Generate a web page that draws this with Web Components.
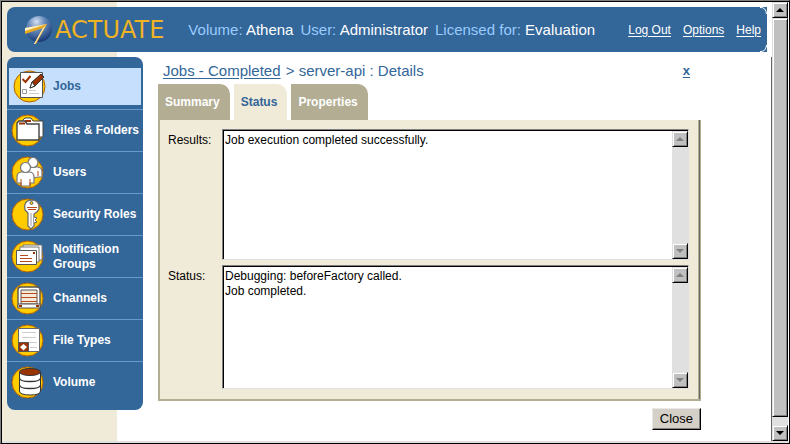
<!DOCTYPE html>
<html lang="en">
<head>
<meta charset="utf-8">
<title>Actuate - Jobs</title>
<style>
    html, body {
        height: 100%;
        margin: 0;
    }

    body {
        font-family: "Liberation Sans", Arial, sans-serif;
        font-size: 12px;
        --blue: #336699;
        --light-blue: #99ccff;
        --beige: #f0ead8;
        --tan: #b3ae93;
    }
</style>
</head>
<body>
<app-frame>
    <top-banner slot="banner">
        <brand-logo slot="logo">ACTUATE</brand-logo>
        <info-pair label="Volume:">Athena</info-pair>
        <info-pair label="User:">Administrator</info-pair>
        <info-pair label="Licensed for:">Evaluation</info-pair>
        <banner-link slot="links">Log Out</banner-link>
        <banner-link slot="links">Options</banner-link>
        <banner-link slot="links">Help</banner-link>
    </top-banner>

    <side-menu slot="menu">
        <menu-item icon="jobs" selected>Jobs</menu-item>
        <menu-item icon="files">Files &amp; Folders</menu-item>
        <menu-item icon="users">Users</menu-item>
        <menu-item icon="roles">Security Roles</menu-item>
        <menu-item icon="groups">Notification Groups</menu-item>
        <menu-item icon="channels">Channels</menu-item>
        <menu-item icon="types">File Types</menu-item>
        <menu-item icon="volume">Volume</menu-item>
    </side-menu>

    <crumb-bar parent="Jobs - Completed">&gt; server-api : Details</crumb-bar>
    <tab-strip>
        <tab-button>Summary</tab-button>
        <tab-button selected>Status</tab-button>
        <tab-button>Properties</tab-button>
    </tab-strip>
    <detail-panel>
        <log-field label="Results:" tall>Job execution completed successfully.</log-field>
        <log-field label="Status:">Debugging: beforeFactory called.
Job completed.</log-field>
    </detail-panel>
    <action-bar>Close</action-bar>
</app-frame>

<script>
const define = (name, html, setup) => {
  const template = document.createElement("template");
  template.innerHTML = html;

  customElements.define(
    name,
    class extends HTMLElement {
      constructor() {
        super();
        this.attachShadow({ mode: "open" });
        this.shadowRoot.appendChild(template.content.cloneNode(true));
      }

      connectedCallback() {
        if (setup) setup(this, this.shadowRoot);
      }
    }
  );
};

// every menu icon sits on the same 32px gold disc
const icons = {
  jobs: `
    <path d="M7.500 2.500h22v25h-22z" fill="#fff" stroke="#555"/>
    <path d="M9.500 9l3 3 5-6" fill="none" stroke="#993300" stroke-width="2"/>
    <path d="M9.500 19.500h4v4h-4z" fill="#fff" stroke="#999"/>
    <path d="M16 20.500h7M16 23.500h10" stroke="#ccc"/>
    <path d="M17 18l2-6L28 4l3 3-9 9z" fill="#993300" stroke="#333"/>
    <path d="M17 18l2-6 3 4z" fill="#fff" stroke="#333"/>`,
  files: `
    <path d="M12 6l2-2h6l2 3h10v16H12z" fill="#fff" stroke="#444"/>
    <path d="M14 7h6" stroke="#993300" stroke-width="2"/>
    <path d="M6 11V9l2-2h6l2 3h12v16H6z" fill="#fff" stroke="#444" stroke-width="1.400"/>
    <path d="M8 9.500h6" stroke="#993300" stroke-width="2"/>`,
  users: `
    <g fill="#fff" stroke="#777" stroke-width="1.200">
      <path d="M15 20v-4q0-5 5-5h6q5 0 5 5v5h-4l-5 1z"/>
      <circle cx="22" cy="6.500" r="5"/>
      <path d="M6 27v-6q0-5 5-5h7q5 0 5 5v6h-4v3h-9v-3z"/>
      <circle cx="14.500" cy="11.500" r="5"/>
    </g>
    <path d="M10 23v7M19 23v7M27 15v5" stroke="#b84a20"/>`,
  roles: `
    <path d="M17 15l-3-3q-2-9 6-10 9 0 8 9-1 3-5 5v12l-3 3-3-3z" fill="#fff" stroke="#666" stroke-width="1.200"/>
    <path d="M23 19l3 1-2 2 2 2-3 1" fill="#fff" stroke="#666"/>
    <circle cx="20.500" cy="5" r="1.500" fill="#ffcc00" stroke="#666"/>
    <path d="M16 9.500h10M17 11.500h8" stroke="#b84a20"/>
    <path d="M20 15v13" stroke="#999"/>`,
  groups: `
    <path d="M12 5h19v15H12z" fill="#fff" stroke="#777"/>
    <path d="M9 7h19v15H9z" fill="#fff" stroke="#777"/>
    <path d="M5.500 10.500h20v14h-20z" fill="#fff" stroke="#555"/>
    <path d="M9 15.500h8M9 18.500h12M9 21.500h12" stroke="#b84a20"/>
    <path d="M22 12h2v2h-2z" fill="#993300"/>`,
  channels: `
    <path d="M7 25V8q0-3 3-3h16q3 0 3 3v17z" fill="#fff" stroke="#555" stroke-width="1.400"/>
    <path d="M10 8h16v14H10z" fill="#f5ead8" stroke="#555"/>
    <path d="M10 11.500h16M10 15.500h16M10 19.500h16" stroke="#b84a20"/>
    <path d="M7 22h22v4H7z" fill="#fff" stroke="#555"/>
    <path d="M8 23h3v2H8zM25 23h3v2h-3z" fill="#993300"/>`,
  types: `
    <path d="M7.500 4.500h21v23h-21z" fill="#fff" stroke="#666"/>
    <path d="M11 8.500h14M11 13.500h14M17 18.500h9M19 23.500h7" stroke="#ccc"/>
    <path d="M7.500 18.500h10v9h-10z" fill="#993300" stroke="#555"/>
    <path d="M12.500 20l3.500 3-3.500 3.500L9 23z" fill="#fff"/>`,
  volume: `
    <path d="M8.500 6v19q0 4 10.500 4t10.500-4V6z" fill="#fff" stroke="#333"/>
    <ellipse cx="19" cy="6" rx="10.500" ry="3.500" fill="#993300" stroke="#333"/>
    <path d="M8.500 12q0 3.500 10.500 3.500T29.500 12M8.500 19q0 3.500 10.500 3.500T29.500 19" fill="none" stroke="#333" stroke-width="1.300"/>`,
};

define("app-frame", `
    <style>
        :host {
            display: flex;
            min-height: 100%;
            box-sizing: border-box;
            padding: 1px 1px 2px;
            border: 1px solid;
            border-color: #808080 #000000 #000000 #808080;
            box-shadow: inset 1px 1px #000000, inset 0 -2px #e0e0e0;
            background: linear-gradient(to right, var(--beige) 116px, #ffffff 116px);
        }

        .page {
            flex: 1;
            min-width: 0;
            display: flex;
            flex-direction: column;
            gap: 5px;
            padding-top: 5px;
        }

        .body {
            flex: 1;
            display: flex;
            align-items: flex-start;
            gap: 15px;
            padding: 0 70px 0 5px;
            border-right: 1px solid #666666;
        }

        main {
            flex: 1;
            min-width: 0;
        }
    </style>
    <div class="page">
        <slot name="banner"></slot>
        <div class="body">
            <slot name="menu"></slot>
            <main><slot></slot></main>
        </div>
    </div>
    <scroll-rail thumb></scroll-rail>
`);

define("top-banner", `
    <style>
        :host {
            display: flex;
            align-items: center;
            position: relative;
            height: 45px;
            margin: 0 5px;
            padding: 0 6px 0 16px;
            box-sizing: border-box;
            background-color: var(--blue);
            border-radius: 8px 0 0 8px;
        }

        .info {
            display: flex;
            gap: 7px;
            margin-left: 24px;
            flex: 1;
        }

        nav {
            display: flex;
            gap: 12px;
        }

        svg {
            position: absolute;
            right: 0;
            width: 7px;
            height: 7px;
            fill: none;
            stroke: #ffffff;
        }

        .top { top: 0; }
        .bottom { bottom: 0; }
    </style>
    <slot name="logo"></slot>
    <div class="info"><slot></slot></div>
    <nav><slot name="links"></slot></nav>
    <svg class="top" viewBox="0 0 7 7"><path d="M0 .5Q6 0 6.500 7"/></svg>
    <svg class="bottom" viewBox="0 0 7 7"><path d="M0 6.500Q6 7 6.500 0"/></svg>
`);

define("brand-logo", `
    <style>
        :host {
            display: flex;
            align-items: center;
            gap: 2px;
            color: #f0b323;
            font-family: "DejaVu Sans", sans-serif;
            font-size: 24px;
            line-height: 32px;
        }

        svg {
            width: 30px;
            height: 30px;
        }
    </style>
    <svg viewBox="0 0 30 30" aria-hidden="true">
        <defs>
            <radialGradient id="ball" cx=".4" cy=".22" r=".75">
                <stop offset="0" stop-color="#d5e0f0"/>
                <stop offset=".4" stop-color="#6c8fc0"/>
                <stop offset="1" stop-color="#1c3f7c"/>
            </radialGradient>
        </defs>
        <circle cx="16" cy="14" r="13" fill="url(#ball)"/>
        <path d="M2 13L24 9 13 29h-2L20 13 2 19z" fill="#e8a91c"/>
        <path d="M2 13L24 9 2 16zM23 10L12 29h-1L20 13z" fill="#fff4cf"/>
    </svg>
    <slot></slot>
`);

define("info-pair", `
    <style>
        :host {
            display: block;
            color: #ffffff;
            font-size: 15px;
            line-height: 18px;
            white-space: nowrap;
        }

        .label {
            color: var(--light-blue);
        }
    </style>
    <span class="label"></span> <slot></slot>
`, (host, root) => {
  root.querySelector(".label").textContent = host.getAttribute("label");
});

define("banner-link", `
    <style>
        :host { display: block; }

        a {
            color: #ffffff;
            line-height: 16px;
            text-underline-offset: 2px;
            white-space: nowrap;
        }
    </style>
    <a href="#"><slot></slot></a>
`);

define("side-menu", `
    <style>
        :host {
            display: block;
            width: 136px;
            flex: none;
            box-sizing: border-box;
            padding: 11px 0 7px;
            background-color: var(--blue);
            border-radius: 8px;
        }
    </style>
    <nav><slot></slot></nav>
`);

define("menu-item", `
    <style>
        :host {
            display: block;
            border-top: 1px solid #6699cc;
        }

        :host([selected]) {
            border-top: 0;
            padding: 0 2px 4px;
        }

        a {
            display: flex;
            align-items: center;
            gap: 9px;
            height: 41px;
            padding-left: 4px;
            box-sizing: border-box;
            color: #ffffff;
            font-weight: bold;
            line-height: 15px;
            text-decoration: none;
        }

        :host([selected]) a {
            height: 37px;
            gap: 7px;
            background-color: #c5dffc;
            color: var(--blue);
        }

        svg {
            flex: none;
            width: 33px;
            height: 33px;
        }
    </style>
    <a href="#">
        <svg viewBox="0 0 33 33" aria-hidden="true">
            <circle cx="16.500" cy="16.500" r="15.500" fill="#ffcc00" stroke="#b35f00"/>
            <g class="glyph"></g>
        </svg>
        <span><slot></slot></span>
    </a>
`, (host, root) => {
  root.querySelector(".glyph").innerHTML = icons[host.getAttribute("icon")];
});

define("crumb-bar", `
    <style>
        :host {
            display: flex;
            justify-content: space-between;
            padding: 5px 11px 4px 5px;
            color: var(--blue);
            font-size: 15px;
            line-height: 18px;
        }

        a {
            color: inherit;
            text-underline-offset: 2px;
        }

        .parent {
            margin-right: 1px;
        }

        .close {
            font-size: 13px;
            font-weight: bold;
        }
    </style>
    <div><a class="parent" href="#"></a> <slot></slot></div>
    <a class="close" href="#">x</a>
`, (host, root) => {
  root.querySelector(".parent").textContent = host.getAttribute("parent");
});

define("tab-strip", `
    <style>
        :host {
            display: flex;
            gap: 4px;
        }
    </style>
    <slot></slot>
`);

define("tab-button", `
    <style>
        button {
            height: 36px;
            padding: 0 10px 0 7px;
            border: 0;
            border-radius: 0 10px 0 0;
            background-color: var(--tan);
            color: #ffffff;
            font: bold 12px/16px "Liberation Sans", Arial, sans-serif;
        }

        :host([selected]) button {
            background-color: var(--beige);
            color: var(--blue);
        }
    </style>
    <button type="button"><slot></slot></button>
`);

define("detail-panel", `
    <style>
        :host {
            display: flex;
            flex-direction: column;
            gap: 5px;
            padding: 9px 11px 10px 8px;
            border: solid var(--tan);
            border-width: 0 1px 2px 2px;
            background-color: var(--beige);
            box-shadow: inset -1px 0 #666666, inset -2px 0 var(--tan);
        }
    </style>
    <slot></slot>
`);

define("log-field", `
    <style>
        :host {
            display: grid;
            grid-template-columns: 54px 1fr;
        }

        label {
            padding-top: 3px;
            line-height: 16px;
        }

        .box {
            display: flex;
            border: 1px solid;
            border-color: #808080 #e0e0e0 #e0e0e0 #808080;
            box-shadow: inset 1px 1px #000000;
            background-color: #ffffff;
            padding: 1px 0 0 1px;
        }

        textarea {
            flex: 1;
            height: 121px;
            min-width: 0;
            box-sizing: border-box;
            margin: 0;
            padding: 2px 1px;
            border: 0;
            outline: 0;
            resize: none;
            overflow: hidden;
            background: none;
            color: #000000;
            font: 12px/15px "Liberation Sans", Arial, sans-serif;
        }

        :host([tall]) textarea {
            height: 128px;
        }
    </style>
    <label for="log"></label>
    <div class="box">
        <textarea id="log" readonly></textarea>
        <scroll-rail disabled></scroll-rail>
    </div>
`, (host, root) => {
  root.querySelector("label").textContent = host.getAttribute("label");
  root.querySelector("textarea").value = host.textContent;
});

define("scroll-rail", `
    <style>
        :host {
            display: flex;
            flex-direction: column;
            flex: none;
            width: 16px;
            background-color: #e0e0e0;
        }

        button, .thumb {
            box-sizing: border-box;
            border: 1px solid;
            border-color: #e0e0e0 #000000 #000000 #e0e0e0;
            background-color: #c0c0c0;
            box-shadow: inset 1px 1px #ffffff, inset -1px -1px #808080;
        }

        button {
            display: flex;
            align-items: center;
            justify-content: center;
            height: 16px;
            padding: 0;
        }

        .thumb {
            display: none;
            flex: 1;
            margin-bottom: 8px;
        }

        .gap {
            flex: 1;
        }

        :host([thumb]) .thumb { display: block; }
        :host([thumb]) .gap { display: none; }

        svg {
            width: 8px;
            height: 4px;
            fill: #000000;
        }

        :host([disabled]) svg { fill: #808080; }
    </style>
    <button type="button" aria-label="Scroll up"><svg viewBox="0 0 8 4"><path d="M0 4L4 0l4 4z"/></svg></button>
    <div class="thumb"></div>
    <div class="gap"></div>
    <button type="button" aria-label="Scroll down"><svg viewBox="0 0 8 4"><path d="M0 0h8L4 4z"/></svg></button>
`);

define("action-bar", `
    <style>
        :host {
            display: flex;
            justify-content: flex-end;
            padding-top: 7px;
        }

        button {
            height: 22px;
            padding: 0 7px;
            border: 1px solid;
            border-color: #e8e8e8 #000000 #000000 #e8e8e8;
            background-color: #d4d0c8;
            box-shadow: inset -1px -1px #808080;
            color: #000000;
            font: 13px/16px "Liberation Sans", Arial, sans-serif;
        }
    </style>
    <button type="button"><slot></slot></button>
`);
</script>
</body>
</html>
